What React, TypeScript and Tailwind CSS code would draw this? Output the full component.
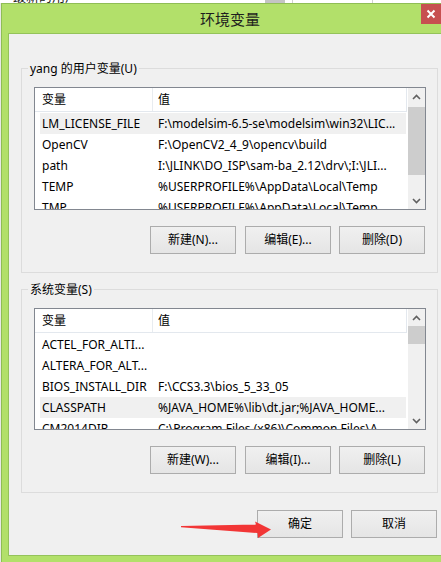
import React from "react";

const USER_ROWS: [string, string][] = [
  ["LM_LICENSE_FILE", "F:\\modelsim-6.5-se\\modelsim\\win32\\LIC..."],
  ["OpenCV", "F:\\OpenCV2_4_9\\opencv\\build"],
  ["path", "I:\\JLINK\\DO_ISP\\sam-ba_2.12\\drv\\;I:\\JLI..."],
  ["TEMP", "%USERPROFILE%\\AppData\\Local\\Temp"],
  ["TMP", "%USERPROFILE%\\AppData\\Local\\Temp"],
];

const SYS_ROWS: [string, string][] = [
  ["ACTEL_FOR_ALTI...", ""],
  ["ALTERA_FOR_ALT...", ""],
  ["BIOS_INSTALL_DIR", "F:\\CCS3.3\\bios_5_33_05"],
  ["CLASSPATH", "%JAVA_HOME%\\lib\\dt.jar;%JAVA_HOME..."],
  ["CM2014DIR", "C:\\Program Files (x86)\\Common Files\\A..."],
];

function ChevronUp() {
  return (
    <svg width="9" height="6" viewBox="0 0 9 6">
      <polyline points="1,5 4.5,1.5 8,5" fill="none" stroke="#606060" strokeWidth="1.6" />
    </svg>
  );
}

function ChevronDown() {
  return (
    <svg width="9" height="6" viewBox="0 0 9 6">
      <polyline points="1,1 4.5,4.5 8,1" fill="none" stroke="#606060" strokeWidth="1.6" />
    </svg>
  );
}

function ListBox({
  rows,
  highlight,
  thumbTop,
  thumbH,
  h,
}: {
  rows: [string, string][];
  highlight: number;
  thumbTop: number;
  thumbH: number;
  h: string;
}) {
  return (
    <div className={`w-[392px] ${h} border border-[#828790] bg-white flex overflow-hidden`}>
      <div className="w-[373px] flex flex-col overflow-hidden">
        <div className="w-[372px] h-[24px] shrink-0 border-b border-r border-[#e3e8ee] flex items-center">
          <div className="w-[118px] h-full flex items-center pl-[7px] border-r border-[#e8ecf0]">变量</div>
          <div className="pl-[5px]">值</div>
        </div>
        <div className="h-[1px] shrink-0" />
        {rows.map((r, i) => (
          <div
            key={i}
            className={`ml-[5px] w-[366px] h-[21px] shrink-0 flex items-center ${
              i === highlight ? "bg-[#f0f0f0]" : ""
            }`}
          >
            <div className="w-[116px] pl-[2px] whitespace-nowrap overflow-hidden">{r[0]}</div>
            <div className="pl-[2px] whitespace-nowrap">{r[1]}</div>
          </div>
        ))}
      </div>
      <div className="w-[1px]" />
      <div className="w-[17px] bg-[#f0f0f0] flex flex-col">
        <div className="h-[17px] shrink-0 flex items-center justify-center">
          <ChevronUp />
        </div>
        <div className="flex-1 flex flex-col">
          <div className="bg-[#cdcdcd] w-full" style={{ marginTop: thumbTop, height: thumbH }} />
        </div>
        <div className="h-[17px] shrink-0 flex items-center justify-center">
          <ChevronDown />
        </div>
      </div>
    </div>
  );
}

function Btn({ children, className = "" }: { children: React.ReactNode; className?: string }) {
  return (
    <div
      className={`w-[86px] h-[28px] border border-[#acacac] bg-linear-to-b from-[#f0f0f0] to-[#e5e5e5] flex items-center justify-center ${className}`}
    >
      {children}
    </div>
  );
}

export default function App() {
  return (
    <div className="w-[441px] h-[562px] overflow-hidden bg-white relative flex flex-col font-['Noto_Sans','Noto_Sans_CJK_SC',sans-serif] text-[12px] text-black">
      {/* background app strip */}
      <div className="h-[3px] shrink-0 flex overflow-hidden bg-white">
        <div className="ml-[13px] -mt-[11px] text-[13px] leading-[15px] text-[#222] whitespace-nowrap">最新的用户</div>
        <div className="ml-[187px] w-[20px] h-[3px] bg-[#c4c4c4]" />
        <div className="ml-[7px] w-[1px] h-[3px] bg-[#d0d0d0]" />
        <div className="ml-[79px] w-[1px] h-[3px] bg-[#d0d0d0]" />
      </div>
      <div className="flex-1 flex">
        <div className="w-[1px] shrink-0 bg-[#e8e8e8]" />
        {/* window */}
        <div className="w-[466px] shrink-0 flex flex-col bg-[#b2e06a] border-l border-t border-[#8fbd55]">
          {/* title bar */}
          <div className="h-[29px] shrink-0 flex items-start">
            <div className="ml-[198px] mt-[5px] text-[15px] leading-[20px] text-[#1e1e1e] font-['Noto_Sans_CJK_SC',sans-serif]">
              环境变量
            </div>
            <div className="ml-auto w-[46px] h-[20px] bg-[#c75050] flex items-center pl-[5px]">
              <svg width="10" height="10" viewBox="0 0 10 10">
                <path d="M1.5 1.5 L8.5 8.5 M8.5 1.5 L1.5 8.5" stroke="#fff" strokeWidth="2" />
              </svg>
            </div>
          </div>
          {/* client frame */}
          <div className="flex-1 flex pl-[6px] pb-[6px]">
            <div className="flex-1 bg-[#f0f0f0] border-l border-t border-b border-[#94c35a] flex flex-col pl-[12px]">
              <fieldset className="mt-[26px] w-[417px] border border-[#dcdcdc]">
                <legend className="ml-[6px] px-[2px] leading-[17px]">yang 的用户变量(U)</legend>
                <div className="pl-[12px] pt-[10px] pb-[18px]">
                  <ListBox rows={USER_ROWS} highlight={0} thumbTop={2} thumbH={68} h="h-[123px]" />
                  <div className="mt-[16px] ml-[116px] flex">
                    <Btn>新建(N)...</Btn>
                    <Btn className="ml-[9px]">编辑(E)...</Btn>
                    <Btn className="ml-[8px]">删除(D)</Btn>
                  </div>
                </div>
              </fieldset>
              <fieldset className="mt-[8px] w-[417px] border border-[#dcdcdc]">
                <legend className="ml-[6px] px-[2px] leading-[17px]">系统变量(S)</legend>
                <div className="pl-[12px] pt-[10px] pb-[18px]">
                  <ListBox rows={SYS_ROWS} highlight={3} thumbTop={0} thumbH={18} h="h-[122px]" />
                  <div className="mt-[16px] ml-[116px] flex">
                    <Btn>新建(W)...</Btn>
                    <Btn className="ml-[9px]">编辑(I)...</Btn>
                    <Btn className="ml-[8px]">删除(L)</Btn>
                  </div>
                </div>
              </fieldset>
              <div className="mt-[17px] ml-[236px] flex">
                <Btn className="border-[#3c8ee2]">确定</Btn>
                <Btn className="ml-[8px]">取消</Btn>
              </div>
            </div>
          </div>
        </div>
      </div>
      {/* red annotation arrow */}
      <svg className="absolute left-0 top-0 pointer-events-none" width="441" height="562" viewBox="0 0 441 562">
        <polygon
          points="181,526 256,524.5 255,521.5 271,529.5 258,538 257.5,533 181,527.3"
          fill="#f23636"
        />
      </svg>
    </div>
  );
}
